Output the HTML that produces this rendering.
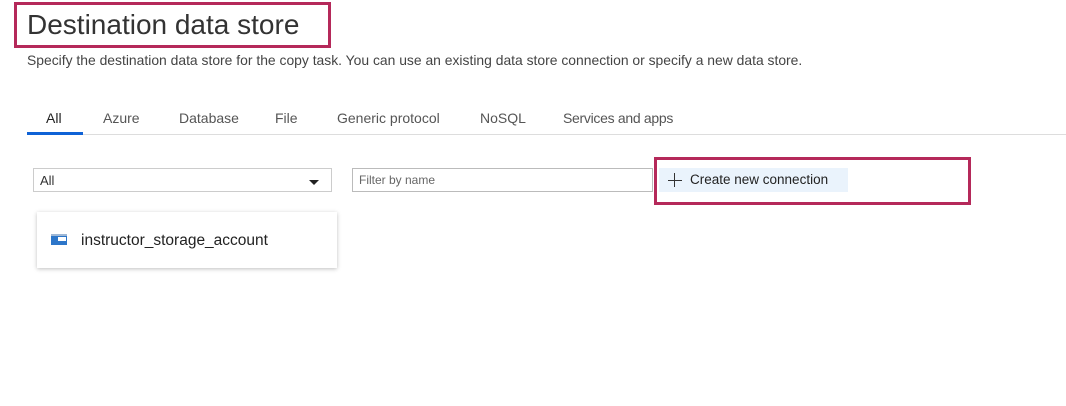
<!DOCTYPE html>
<html><head><style>
*{margin:0;padding:0;box-sizing:border-box}
body{width:1066px;height:406px;background:#fff;font-family:"Liberation Sans",sans-serif;position:relative;overflow:hidden;color:#333}
.abs{position:absolute}
.redbox{position:absolute;border:3px solid #b5295a}
</style></head><body>
<div class="redbox" style="left:14px;top:2px;width:317px;height:46px"></div>
<div class="abs" style="left:27px;top:9px;font-size:28px;color:#333;white-space:nowrap">Destination data store</div>
<div class="abs" style="left:27px;top:52px;font-size:13.9px;color:#444;white-space:nowrap">Specify the destination data store for the copy task. You can use an existing data store connection or specify a new data store.</div>
<div class="abs" style="left:27px;top:134px;width:1039px;height:1px;background:#ddd"></div>
<div class="abs" style="left:27px;top:132px;width:56px;height:3px;background:#0f62d6"></div>
<div class="abs" style="top:110px;left:0;font-size:14px;color:#555;white-space:nowrap">
<span class="abs" style="left:46px;color:#222">All</span>
<span class="abs" style="left:103px">Azure</span>
<span class="abs" style="left:179px">Database</span>
<span class="abs" style="left:275px">File</span>
<span class="abs" style="left:337px">Generic protocol</span>
<span class="abs" style="left:480px">NoSQL</span>
<span class="abs" style="left:563px;letter-spacing:-0.3px">Services and apps</span>
</div>
<div class="abs" style="left:33px;top:168px;width:299px;height:24px;border:1px solid #ccc;font-size:13px;padding:4px 6px;color:#333">All</div>
<div class="abs" style="left:309px;top:180px;width:0;height:0;border-left:5px solid transparent;border-right:5px solid transparent;border-top:5px solid #222"></div>
<div class="abs" style="left:352px;top:168px;width:301px;height:24px;border:1px solid #bbb;font-size:12px;padding:4px 6px;color:#666">Filter by name</div>
<div class="redbox" style="left:654px;top:157px;width:317px;height:48px"></div>
<div class="abs" style="left:659px;top:168px;width:189px;height:24px;background:#eaf3fc"></div>
<div class="abs" style="left:668px;top:173px;width:14px;height:14px">
<div class="abs" style="left:6px;top:0;width:1px;height:14px;background:#333"></div>
<div class="abs" style="left:0;top:7px;width:14px;height:1px;background:#333"></div></div>
<div class="abs" style="left:690px;top:172px;font-size:13.5px;color:#222;white-space:nowrap">Create new connection</div>
<div class="abs" style="left:37px;top:212px;width:300px;height:56px;background:#fff;box-shadow:0 1px 4px rgba(0,0,0,0.25)"></div>
<div class="abs" style="left:51px;top:234px;width:16px;height:11px;background:#2d76c9">
<div class="abs" style="left:0;top:0;width:16px;height:2px;background:#9fb8d6"></div>
<div class="abs" style="left:7px;top:3px;width:8px;height:4px;background:#fff"></div></div>
<div class="abs" style="left:81px;top:232px;font-size:15.5px;color:#222;white-space:nowrap">instructor_storage_account</div>
</body></html>
